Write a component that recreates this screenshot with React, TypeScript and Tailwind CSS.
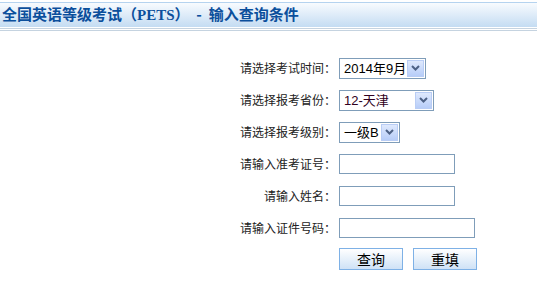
import React from 'react';

const cjk = '"Noto Sans CJK SC", "Liberation Sans", sans-serif';

function Chevron() {
  return (
    <span className="flex h-full w-[17px] shrink-0 items-center justify-center border border-[#b9cdf5] bg-gradient-to-b from-[#dfe9fd] to-[#b7cdf8]">
      <svg width="9" height="6" viewBox="0 0 9 6">
        <path d="M1 1 L4.5 4.5 L8 1" fill="none" stroke="#4d6185" strokeWidth="2" />
      </svg>
    </span>
  );
}

function FakeSelect({ value, width, color = 'text-black' }: { value: string; width: string; color?: string }) {
  return (
    <div className={`flex h-[21px] items-center justify-between border border-[#7f9db9] bg-white p-[1px] ${width}`}>
      <span
        className={`whitespace-nowrap pl-[3px] text-[13px] leading-none ${color}`}
        style={{ fontFamily: '"Liberation Sans", "Noto Sans CJK SC", sans-serif' }}
      >
        {value}
      </span>
      <Chevron />
    </div>
  );
}

function Row({ label, children }: { label: string; children: React.ReactNode }) {
  return (
    <div className="flex h-[32px] items-center">
      <div className="w-[336px] text-right text-[12px] text-[#222]">{label}</div>
      <div className="pl-[3px]">{children}</div>
    </div>
  );
}

export default function App() {
  return (
    <div className="h-[290px] w-[537px] bg-white" style={{ fontFamily: cjk }}>
      {/* header */}
      <div className="pt-[2px]">
        <div className="flex h-[25px] items-center border-t border-[#b5d3ef] bg-gradient-to-b from-[#f8fbfe] to-[#c4dcf2] pl-[2px]">
          <h1 className="whitespace-pre text-[15px] font-bold text-[#0b4f9c]">
            全国英语等级考试（<span style={{ fontFamily: '"Liberation Serif", serif' }}>PETS</span>）  -  输入查询条件
          </h1>
        </div>
        <div className="mt-[1px] h-[1px] bg-[#c5d3e0]" />
        <div className="mt-[1px] h-[1px] bg-[#c5d3e0]" />
      </div>

      {/* form */}
      <div className="mt-[21px]">
        <Row label="请选择考试时间：">
          <FakeSelect value="2014年9月" width="w-[87px]" />
        </Row>
        <Row label="请选择报考省份：">
          <FakeSelect value="12-天津" width="w-[95px]" color="text-[#300020]" />
        </Row>
        <Row label="请选择报考级别：">
          <FakeSelect value="一级B" width="w-[61px]" />
        </Row>
        <Row label="请输入准考证号：">
          <input className="block h-[20px] w-[116px] border border-[#7f9db9] outline-none" />
        </Row>
        <Row label="请输入姓名：">
          <input className="block h-[20px] w-[116px] border border-[#7f9db9] outline-none" />
        </Row>
        <Row label="请输入证件号码：">
          <input className="block h-[20px] w-[136px] border border-[#7f9db9] outline-none" />
        </Row>
        <div className="flex h-[30px] items-center pl-[339px]">
          <div className="flex gap-[10px]">
            <button className="h-[22px] w-[64px] border border-[#7eb1e6] bg-gradient-to-b from-white to-[#cfe2f6] text-[14px] text-black">查询</button>
            <button className="h-[22px] w-[64px] border border-[#7eb1e6] bg-gradient-to-b from-white to-[#cfe2f6] text-[14px] text-black">重填</button>
          </div>
        </div>
      </div>
    </div>
  );
}
